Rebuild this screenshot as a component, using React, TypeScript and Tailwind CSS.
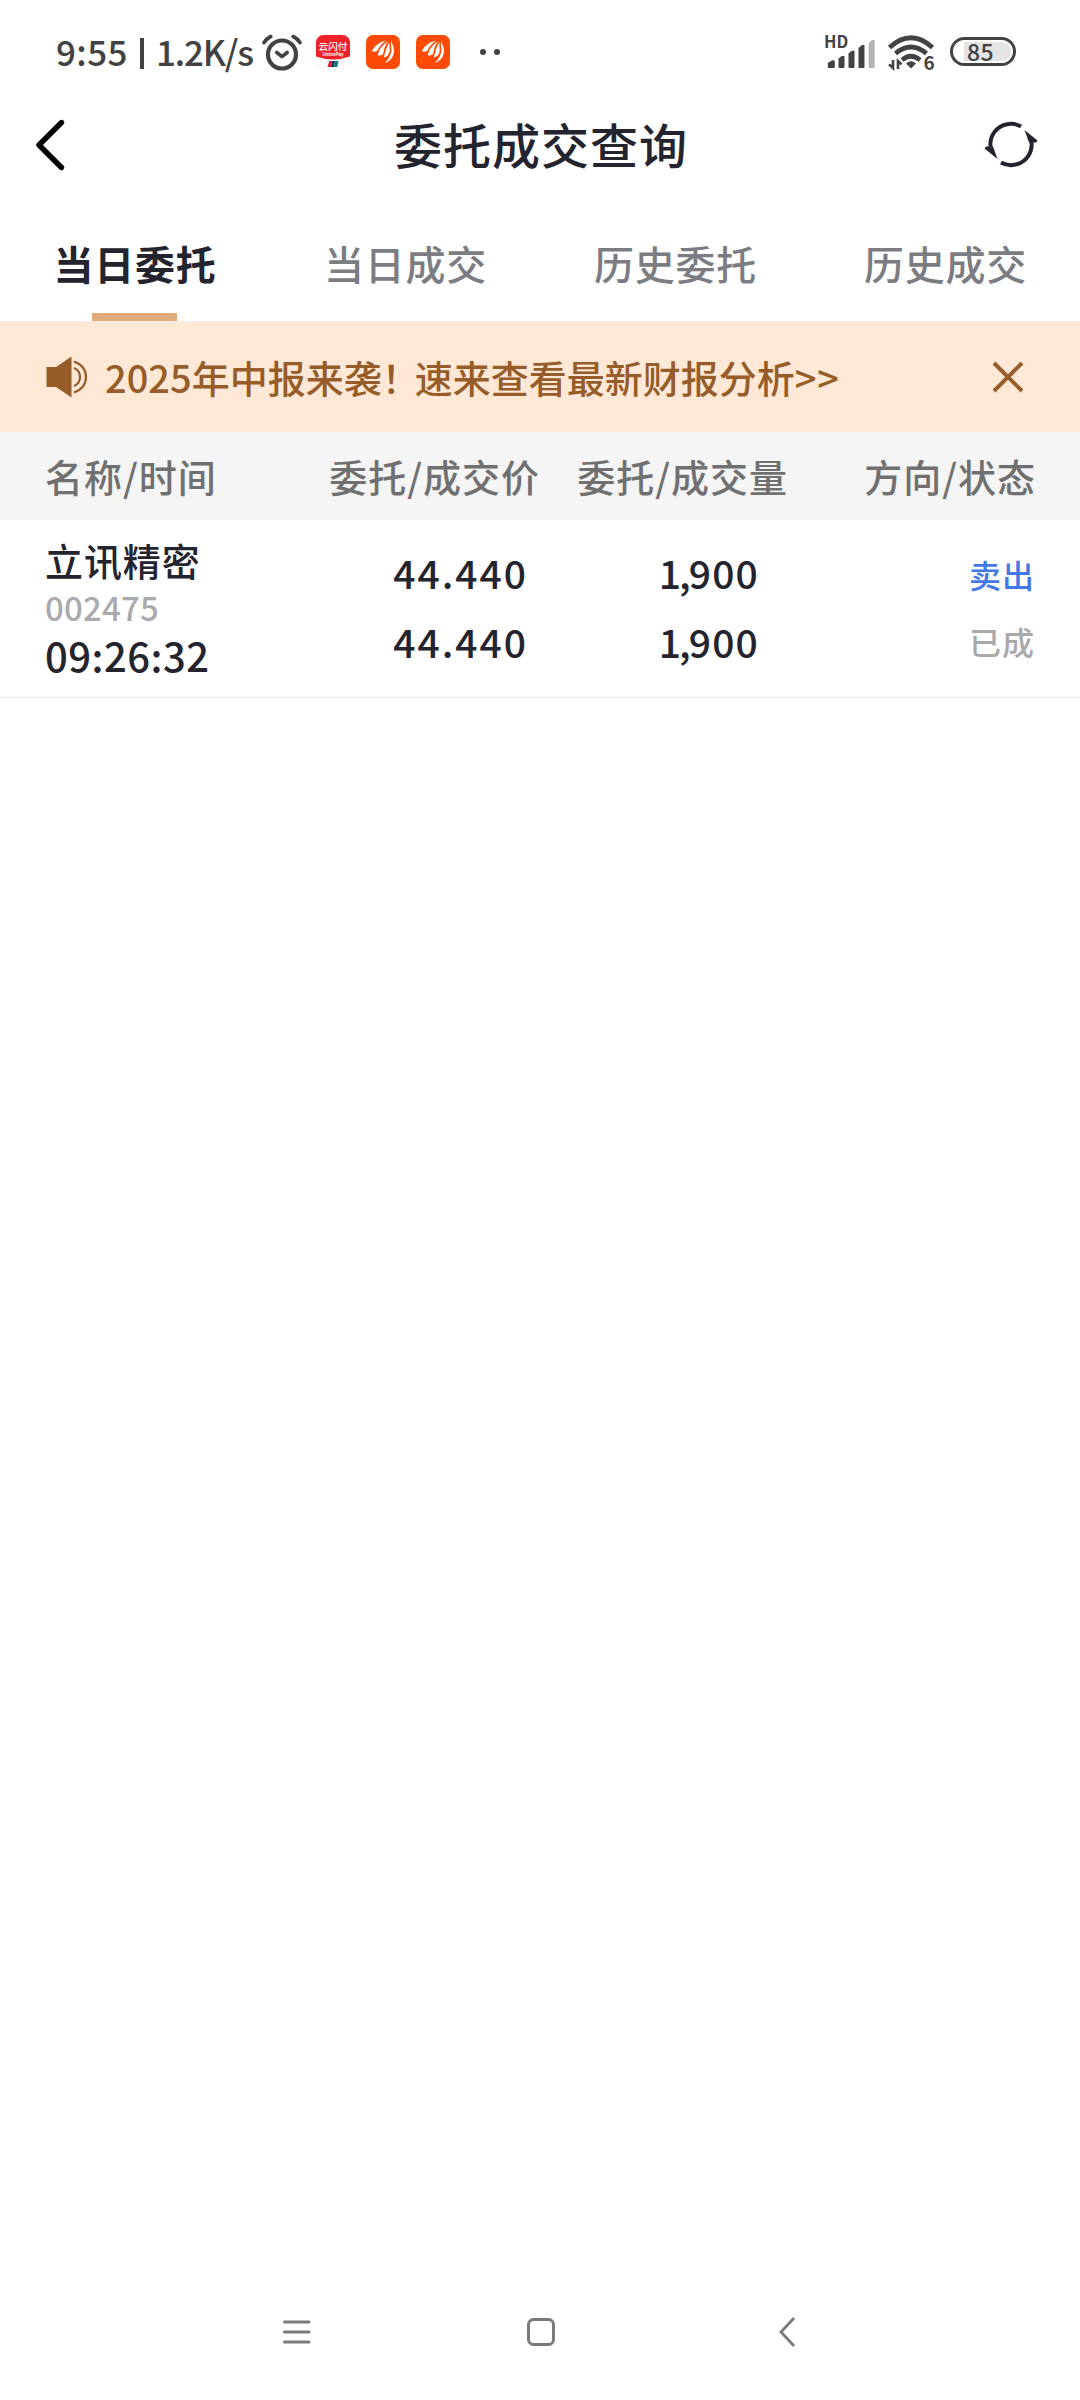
type Order = {
  name: string;
  code: string;
  time: string;
  price: string;
  dealPrice: string;
  amount: string;
  dealAmount: string;
  side: string;
  status: string;
};

const tabs = ['当日委托', '当日成交', '历史委托', '历史成交'];

const orders: Order[] = [
  {
    name: '立讯精密',
    code: '002475',
    time: '09:26:32',
    price: '44.440',
    dealPrice: '44.440',
    amount: '1,900',
    dealAmount: '1,900',
    side: '卖出',
    status: '已成',
  },
];

function AlarmIcon() {
  return (
    <svg width="40" height="38" viewBox="0 0 40 38" fill="none" stroke="#424242" strokeLinecap="round" strokeLinejoin="round">
      <circle cx="20" cy="20.500" r="14" strokeWidth="4.200" />
      <path d="M14.8 18.500l5.2 4.200 5.200-4.200" strokeWidth="3.600" />
      <path d="M2 8.600Q4.500 4.500 8.800 2.500M38 8.600Q35.500 4.500 31.200 2.500" strokeWidth="3.600" />
    </svg>
  );
}

function UnionPayIcon() {
  return (
    <svg width="34" height="34" viewBox="0 0 34 34">
      <defs>
        <clipPath id="up">
          <rect width="34" height="34" rx="7.500" />
        </clipPath>
      </defs>
      <g clipPath="url(#up)">
        <rect width="34" height="34" fill="#fbfbfb" />
        <path d="M0 0h34v21.500q-17 6-34 0z" fill="#ee2229" />
        <path d="M13.200 26h3l-1.400 6h-3.300z" fill="#d8232f" />
        <path d="M16.200 26h3l-1.200 6h-3.200z" fill="#1f3767" />
        <path d="M19.200 26h3.300l-1.200 6H18z" fill="#0f7f83" />
      </g>
      <text x="17" y="14.500" textAnchor="middle" fontSize="9.600" fontWeight="500" fill="#fff" fontFamily="Noto Sans CJK SC, sans-serif">
        云闪付
      </text>
      <text x="17" y="20.500" textAnchor="middle" fontSize="4.600" fontWeight="700" fill="#fff" fontFamily="Liberation Sans, sans-serif">
        UnionPay
      </text>
    </svg>
  );
}

function BrokerIcon() {
  return (
    <svg width="34" height="34" viewBox="0 0 34 34">
      <rect width="34" height="34" rx="7" fill="#fd4a05" />
      <g fill="#fff">
        <path d="M20 5.500C13.500 7 8 11 6 16q3 1.500 5.300-.2C13 12 16 8.500 20 5.500z" />
        <path d="M22 6.300c-5.200 3.200-9 8-10.200 14 2.600.7 4.500 0 5.500-2C18 13.500 19.500 9.500 22 6.300z" />
        <path d="M23.500 7c-3.200 4.500-4 10-5.800 15.500 3.200-.5 5.300-3 6-6.500C23.800 12.500 23 10 23.500 7z" />
        <path d="M25.200 5.500c-.8 4 .4 7 .2 11-1 4.500-3.300 8-6.600 11.700 5.800-2.200 9.400-7 9.200-12.700C27.800 11.500 26 9 25.200 5.500z" />
      </g>
    </svg>
  );
}

function SignalIcon() {
  return (
    <svg className="overflow-visible" width="52" height="36" viewBox="0 0 52 36">
      <text x="-1" y="13.800" fontSize="16.500" fontWeight="700" fill="#424242" fontFamily="Noto Sans CJK SC, sans-serif">
        HD
      </text>
      <g fill="#424242">
        <path d="M2.800 33v-4l4-2.500q3-1 3 1V33q0 1-1 1h-5q-1 0-1-1z" />
        <path d="M13.500 33v-8.500l3-2.300q3-1.400 3 .8V33q0 1-1 1h-4q-1 0-1-1z" />
        <path d="M23.500 33V19.500l3-2.500q3-1.400 3 .8V33q0 1-1 1h-4q-1 0-1-1z" />
        <path d="M33.500 33V14l3-2.600q3-1.400 3 .8V33q0 1-1 1h-4q-1 0-1-1z" />
      </g>
      <path d="M43.700 33V9l3-2.600q3-1.400 3 .8V33q0 1-1 1h-4q-1 0-1-1z" fill="#b3b3b3" />
    </svg>
  );
}

function WifiIcon() {
  return (
    <svg className="overflow-visible" width="48" height="38" viewBox="0 0 48 38" fill="none" stroke="#424242">
      <path d="M1.500 13.500q21.500-19.500 43 0" strokeWidth="4.800" />
      <path d="M7.500 19.500q15.500-13 31 0" strokeWidth="4.600" />
      <path d="M14 26q9-7.500 18 0" strokeWidth="4.600" />
      <path d="M18 29.500q5-4.500 10 0l-5 5z" fill="#424242" stroke="none" />
      <path d="M5 26v8l-4-3.600M10 35v-8l3.500 3.400" strokeWidth="2.600" />
      <text x="35.500" y="36" fontSize="19" fontWeight="700" fill="#424242" stroke="none" fontFamily="Noto Sans CJK SC, sans-serif">
        6
      </text>
    </svg>
  );
}

function StatusBar() {
  return (
    <div className="flex h-[94px] items-start pt-[34px] pl-[56px] text-[#424242]">
      <div className="flex h-[36px] w-[206px] items-center text-[35px] leading-none font-medium whitespace-pre">
        <span className="-mt-[3px] w-[73px] tracking-[0.4px]">9:55</span>
        <span className="mt-[2px] mr-[12px] ml-[11px] h-[31px] w-[4px] bg-[#424242]" />
        <span className="-mt-[3px] tracking-[-1.2px]">1.2K/s</span>
      </div>
      <AlarmIcon />
      <div className="mt-px ml-[14px] flex gap-4">
        <UnionPayIcon />
        <BrokerIcon />
        <BrokerIcon />
      </div>
      <div className="mt-[15px] ml-[30px] flex gap-2">
        <span className="size-[6px] rounded-full bg-[#424242]" />
        <span className="size-[6px] rounded-full bg-[#424242]" />
      </div>
      <div className="ml-auto flex pr-[64px]">
        <SignalIcon />
        <div className="mr-[14px] ml-[11px]">
          <WifiIcon />
        </div>
        <div className="mt-[3px] flex h-[29px] w-[66px] items-center rounded-full border-[3px] border-[#424242] pl-[11px]">
          <span className="flex h-[19px] w-[47px] items-center rounded-r-full bg-[#e4e4e4] pl-[3px] text-[23px] font-medium tracking-[0.5px]">
            85
          </span>
        </div>
      </div>
    </div>
  );
}

function TitleBar() {
  return (
    <header className="flex h-[104px] items-center justify-between pr-[41px] pl-[34px]">
      <svg className="-mt-[2px]" width="60" height="56" viewBox="0 0 60 56" fill="none" stroke="#000" strokeWidth="5.400" strokeLinecap="round" strokeLinejoin="round">
        <path d="M27.500 5.500L5 28l22.500 22.500" />
      </svg>
      <h1 className="-mt-[6px] ml-[5px] text-[48px] leading-none font-medium tracking-[1px] text-[#24242f]">委托成交查询</h1>
      <svg width="56" height="52" viewBox="0 0 56 52" fill="none" stroke="#24242f" strokeWidth="4">
        <path d="M38 6.500A20.500 20.500 0 0 0 8.500 31" />
        <path d="M18 42.500A20.500 20.500 0 0 0 47.500 18" />
        <path d="M41.500 10L54.500 20.500 53 22.500h-7zM14.500 39L1.500 28.500 3 26.500h7z" fill="#24242f" stroke="none" />
      </svg>
    </header>
  );
}

function Tabs() {
  return (
    <nav className="grid h-[124px] grid-cols-4 border-b border-[#ebebeb]">
      {tabs.map((tab, i) => (
        <div key={tab} className="flex flex-col items-center justify-between">
          <span
            className={
              i === 0
                ? 'mt-[45px] text-[40px] leading-[40px] font-bold tracking-[0.8px] text-[#24242f]'
                : 'mt-[45px] ml-px text-[40px] leading-[40px] font-medium tracking-[0.8px] text-[#7c7d82]'
            }
          >
            {tab}
          </span>
          {i === 0 && <span className="mr-px h-[8px] w-[85px] bg-[#e0ac7e]" />}
        </div>
      ))}
    </nav>
  );
}

function Notice() {
  return (
    <div className="flex h-[110px] items-center bg-[#ffe9d6] pr-[55px] pl-[46px] text-[#965d2a]">
      <svg width="42" height="42" viewBox="0 0 42 42" fill="none" stroke="currentColor" strokeWidth="2.200">
        <path d="M.5 11H10L25.500.5v41L10 31H.5z" fill="currentColor" stroke="none" />
        <path d="M28 5.500Q40 10 40 21T28 36.500" />
        <path d="M28 12q6 2.500 6 9T28 30" />
      </svg>
      <p className="-mt-px ml-[17px] text-[38px] leading-none font-medium whitespace-nowrap">
        2025年中报来袭<span className="tracking-[-5px]">！</span>速来查看最新财报分析
        <span className="tracking-[1px]">&gt;&gt;</span>
      </p>
      <svg className="ml-auto" width="34" height="34" viewBox="0 0 34 34" fill="none" stroke="currentColor" strokeWidth="4">
        <path d="M3 3l28 28M31 3L3 31" />
      </svg>
    </div>
  );
}

// "1,900" -> the thousands part is set tighter than the rest
function Amount({ value }: { value: string }) {
  const cut = value.indexOf(',') + 1;

  return (
    <div>
      <span className="tracking-[-2px]">{value.slice(0, cut)}</span>
      {value.slice(cut)}
    </div>
  );
}

function OrderTable() {
  return (
    <section>
      <div className="grid h-[88px] grid-cols-[254px_241px_248px_248px] items-center bg-[#f5f5f5] px-[45px] pb-px text-right text-[38px] leading-none font-medium tracking-[1px] text-[#707070]">
        <span className="text-left">名称/时间</span>
        <span>委托/成交价</span>
        <span>委托/成交量</span>
        <span>方向/状态</span>
      </div>
      {orders.map((order) => (
        <div
          key={order.code}
          className="grid h-[178px] grid-cols-[254px_229px_231px_276px] border-b border-[#e8e8e8] px-[45px] text-right text-[39px] font-medium text-[#24242f]"
        >
          <div className="pt-[20px] text-left">
            <div className="text-[38px] leading-[40px] tracking-[0.9px]">{order.name}</div>
            <div className="mt-[7px] text-[33px] leading-[40px] tracking-[0.2px] text-[#aaaaae]">{order.code}</div>
            <div className="mt-[8px] text-[40px] leading-[40px] tracking-[0.5px]">{order.time}</div>
          </div>
          <div className="pt-[18px] leading-[69px] tracking-[2px]">
            <div>{order.price}</div>
            <div>{order.dealPrice}</div>
          </div>
          <div className="pt-[18px] leading-[69px] tracking-[1.2px]">
            <Amount value={order.amount} />
            <Amount value={order.dealAmount} />
          </div>
          <div className="pt-[21px] text-[32px] leading-[67px] tracking-[1px]">
            <div className="text-[#4478e8]">{order.side}</div>
            <div className="text-[#a9a9ab]">{order.status}</div>
          </div>
        </div>
      ))}
    </section>
  );
}

function NavBar() {
  return (
    <footer className="mt-auto flex h-[136px] items-center justify-between pr-[284px] pl-[282px]">
      <svg width="30" height="30" viewBox="0 0 30 30" stroke="#7a7a7a" strokeWidth="3" strokeLinecap="round">
        <path d="M2.500 5h24.500M2.500 15h24.500M2.500 25h24.500" />
      </svg>
      <svg className="mr-[8px]" width="30" height="30" viewBox="0 0 30 30" fill="none" stroke="#7a7a7a" strokeWidth="3">
        <rect x="2.500" y="2.500" width="25" height="25" rx="5" />
      </svg>
      <svg width="18" height="30" viewBox="0 0 18 30" fill="none" stroke="#7a7a7a" strokeWidth="2.800">
        <path d="M16 1L3 15l13 14" />
      </svg>
    </footer>
  );
}

export default function App() {
  return (
    <main className="flex h-[2400px] w-[1080px] flex-col overflow-hidden bg-white font-['Noto_Sans_CJK_SC',sans-serif]">
      <StatusBar />
      <TitleBar />
      <Tabs />
      <Notice />
      <OrderTable />
      <NavBar />
    </main>
  );
}
